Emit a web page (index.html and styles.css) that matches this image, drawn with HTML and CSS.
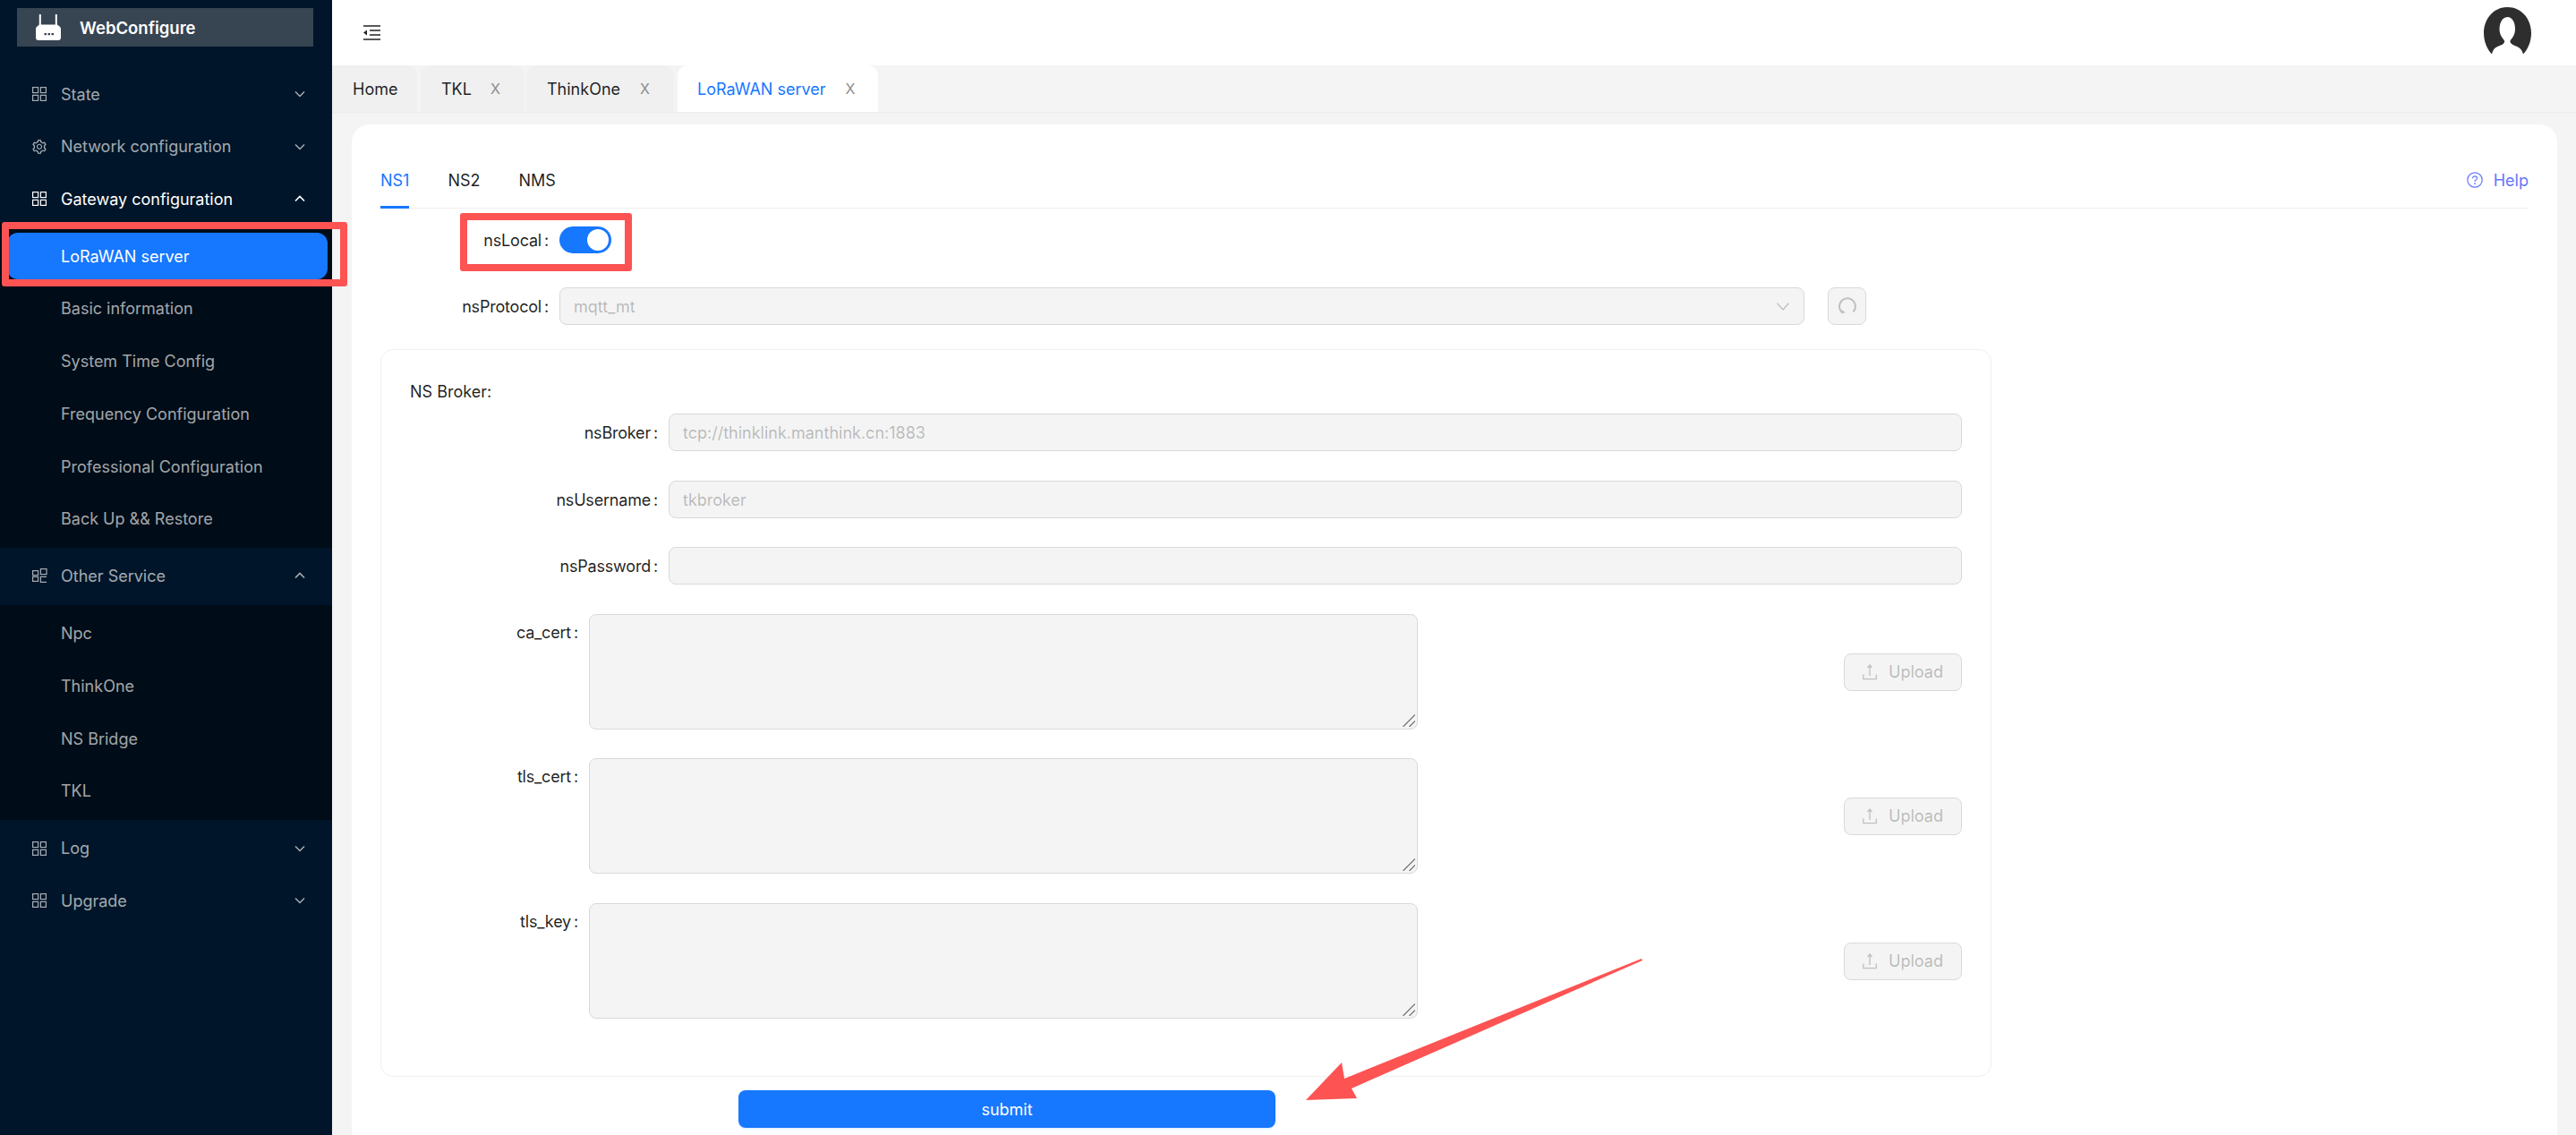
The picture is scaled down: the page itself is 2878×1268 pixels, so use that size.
FILE: index.html
```html
<!DOCTYPE html>
<html lang="en">
<head>
<meta charset="utf-8">
<title>WebConfigure</title>
<link rel="stylesheet" href="styles.css">
</head>
<body>
<svg class="defs" width="0" height="0" aria-hidden="true">
  <symbol id="i-grid" viewBox="0 0 16 16"><g fill="none" stroke="currentColor" stroke-width="1.2"><rect x="0.6" y="0.6" width="6" height="6"/><rect x="9.4" y="0.6" width="6" height="6"/><rect x="0.6" y="9.4" width="6" height="6"/><rect x="9.4" y="9.4" width="6" height="6"/></g></symbol>
  <symbol id="i-blocks" viewBox="0 0 17 16"><g fill="none" stroke="currentColor" stroke-width="1.2"><rect x="0.6" y="2.6" width="6" height="5"/><rect x="0.6" y="9.4" width="6" height="5"/><rect x="9.4" y="0.6" width="6.6" height="6"/><path d="M16 15.4H9.4V9.4H16"/></g></symbol>
  <symbol id="i-gear" viewBox="64 64 896 896"><path fill="currentColor" d="M924.8 625.7l-65.5-56c3.1-19 4.7-38.4 4.7-57.8s-1.6-38.8-4.7-57.8l65.5-56a32.03 32.03 0 0 0 9.3-35.2l-.9-2.6a443.74 443.74 0 0 0-79.7-137.9l-1.8-2.1a32.12 32.12 0 0 0-35.1-9.5l-81.3 28.9c-30-24.6-63.5-44-99.7-57.6l-15.7-85a32.05 32.05 0 0 0-25.8-25.7l-2.7-.5c-52.1-9.4-106.9-9.4-159 0l-2.7.5a32.05 32.05 0 0 0-25.8 25.7l-15.8 85.4a351.86 351.86 0 0 0-99 57.4l-81.9-29.1a32 32 0 0 0-35.1 9.5l-1.8 2.1a446.02 446.02 0 0 0-79.7 137.9l-.9 2.6c-4.5 12.5-.8 26.5 9.3 35.2l66.3 56.6c-3.1 18.8-4.6 38-4.6 57.1 0 19.2 1.5 38.4 4.6 57.1L99 625.5a32.03 32.03 0 0 0-9.3 35.2l.9 2.6c18.1 50.4 44.9 96.9 79.7 137.9l1.8 2.1a32.12 32.12 0 0 0 35.1 9.5l81.9-29.1c29.8 24.5 63.1 43.9 99 57.4l15.8 85.4a32.05 32.05 0 0 0 25.8 25.7l2.7.5a449.4 449.4 0 0 0 159 0l2.7-.5a32.05 32.05 0 0 0 25.8-25.7l15.7-85a350 350 0 0 0 99.7-57.6l81.3 28.9a32 32 0 0 0 35.1-9.5l1.8-2.1c34.8-41.1 61.6-87.5 79.7-137.9l.9-2.6c4.5-12.3.8-26.3-9.3-35zM788.3 465.9c2.5 15.1 3.8 30.6 3.8 46.1s-1.3 31-3.8 46.1l-6.6 40.1 74.7 63.9a370.03 370.03 0 0 1-42.6 73.6L721 702.8l-31.4 25.8c-23.9 19.6-50.5 35-79.3 45.8l-38.1 14.3-17.9 97a377.5 377.5 0 0 1-85 0l-17.9-97.2-37.8-14.5c-28.5-10.8-55-26.2-78.7-45.7l-31.4-25.9-93.4 33.2c-17-22.9-31.2-47.6-42.6-73.6l75.5-64.5-6.5-40c-2.4-14.9-3.7-30.3-3.7-45.5 0-15.3 1.2-30.6 3.7-45.5l6.5-40-75.5-64.5c11.3-26.1 25.6-50.7 42.6-73.6l93.4 33.2 31.4-25.9c23.7-19.5 50.2-34.9 78.7-45.7l37.9-14.3 17.9-97.2c28.1-3.2 56.8-3.2 85 0l17.9 97 38.1 14.3c28.7 10.8 55.4 26.2 79.3 45.8l31.4 25.8 92.8-32.9c17 22.9 31.2 47.6 42.6 73.6L781.8 426l6.5 39.9zM512 326c-97.2 0-176 78.8-176 176s78.8 176 176 176 176-78.8 176-176-78.8-176-176-176zm79.2 255.2A111.6 111.6 0 0 1 512 614c-29.9 0-58-11.7-79.2-32.8A111.6 111.6 0 0 1 400 502c0-29.9 11.7-58 32.8-79.2C454 401.6 482.1 390 512 390c29.9 0 58 11.6 79.2 32.8A111.6 111.6 0 0 1 624 502c0 29.9-11.7 58-32.8 79.2z"/></symbol>
  <symbol id="i-down" viewBox="0 0 12 8"><path d="M1 1.5l5 5 5-5" fill="none" stroke="currentColor" stroke-width="1.5"/></symbol>
  <symbol id="i-up" viewBox="0 0 12 8"><path d="M1 6.5l5-5 5 5" fill="none" stroke="currentColor" stroke-width="1.7"/></symbol>
  <symbol id="i-upload" viewBox="0 0 16 18"><path d="M8 13V1.5M5.6 4L8 1l2.4 3M.8 11.5v5.2h14.4v-5.2" fill="none" stroke="currentColor" stroke-width="1.3"/></symbol>
  <symbol id="i-grip" viewBox="0 0 14 14"><path d="M.5 14L14 .5M7.500 14L14 7.500" fill="none" stroke="#6e6e6e" stroke-width="1.200"/></symbol>
</svg>

<div class="app">
  <aside class="sidebar">
    <div class="logo">
      <svg class="logo-icon" viewBox="0 0 28 29" aria-hidden="true">
        <path d="M4.800 0v12M22.800 0v12" stroke="#fff" stroke-width="2" fill="none"/>
        <path d="M3 13.500h22a3 3 0 0 1 3 3V26a3 3 0 0 1-3 3H3a3 3 0 0 1-3-3v-9.500a3 3 0 0 1 3-3z" fill="#fff"/>
        <path d="M1 14l3-2.500h20l3 2.500z" fill="#fff"/>
        <g fill="#374452"><rect x="9.500" y="21" width="2.500" height="2.200"/><rect x="13.500" y="21" width="2.500" height="2.200"/><rect x="17.500" y="21" width="2.500" height="2.200"/></g>
      </svg>
      <span class="logo-text">WebConfigure</span>
    </div>
    <nav class="menu">
      <div class="row top-row"><svg class="row-icon"><use href="#i-grid"/></svg><span class="row-label">State</span><svg class="chev"><use href="#i-down"/></svg></div>
      <div class="row top-row"><svg class="row-icon"><use href="#i-gear"/></svg><span class="row-label">Network configuration</span><svg class="chev"><use href="#i-down"/></svg></div>
      <div class="row top-row open active"><svg class="row-icon"><use href="#i-grid"/></svg><span class="row-label">Gateway configuration</span><svg class="chev"><use href="#i-up"/></svg></div>
      <div class="sub sub-gateway">
        <div class="row sub-row selected"><span class="row-label">LoRaWAN server</span></div>
        <div class="row sub-row"><span class="row-label">Basic information</span></div>
        <div class="row sub-row"><span class="row-label">System Time Config</span></div>
        <div class="row sub-row"><span class="row-label">Frequency Configuration</span></div>
        <div class="row sub-row"><span class="row-label">Professional Configuration</span></div>
        <div class="row sub-row"><span class="row-label">Back Up &amp;&amp; Restore</span></div>
      </div>
      <div class="row top-row open other"><svg class="row-icon wide"><use href="#i-blocks"/></svg><span class="row-label">Other Service</span><svg class="chev"><use href="#i-up"/></svg></div>
      <div class="sub sub-other">
        <div class="row sub-row"><span class="row-label">Npc</span></div>
        <div class="row sub-row"><span class="row-label">ThinkOne</span></div>
        <div class="row sub-row"><span class="row-label">NS Bridge</span></div>
        <div class="row sub-row"><span class="row-label">TKL</span></div>
      </div>
      <div class="row top-row log"><svg class="row-icon"><use href="#i-grid"/></svg><span class="row-label">Log</span><svg class="chev"><use href="#i-down"/></svg></div>
      <div class="row top-row"><svg class="row-icon"><use href="#i-grid"/></svg><span class="row-label">Upgrade</span><svg class="chev"><use href="#i-down"/></svg></div>
    </nav>
  </aside>

  <main class="main">
    <header class="topbar">
      <svg class="fold" viewBox="0 0 19 17" aria-hidden="true">
        <path d="M0 1h19M7 6h12M7 11h12M0 16h19" stroke="#222" stroke-width="1.700" fill="none"/>
        <path d="M0 8.500L4 5.500v6z" fill="#222"/>
      </svg>
      <svg class="avatar" viewBox="0 0 53 53" aria-hidden="true">
        <path d="M9 52.500C3.500 47 0 38 0 29 0 13 11 0 26.500 0S53 13 53 29c0 9-3.500 18-9 23.500-1-4.500-3.500-7.500-8-9-3-1-5.500-2-6.500-4.500-.4-1 .2-2 1-3 2.500-3 4.500-6.500 4.500-11.500C35 16.500 31.500 11 26.500 11S17.500 16.500 17.500 24.500c0 5 2 8.500 4.500 11.500.8 1 1.400 2 1 3-1 2.500-3.500 3.500-6.500 4.500-4.500 1.500-6.500 4.500-7.500 9z" fill="#2e2e2e"/>
      </svg>
    </header>

    <div class="tabbar">
      <div class="tab tab-home">Home</div>
      <div class="tab tab-tkl">TKL<span class="tab-x">X</span></div>
      <div class="tab tab-one">ThinkOne<span class="tab-x">X</span></div>
      <div class="tab tab-on">LoRaWAN server<span class="tab-x">X</span></div>
    </div>

    <section class="card">
      <div class="ns-tabs">
        <span class="ns-tab ns-on">NS1</span>
        <span class="ns-tab">NS2</span>
        <span class="ns-tab">NMS</span>
        <span class="help">
          <svg class="help-icon" viewBox="0 0 18 18" aria-hidden="true"><circle cx="9" cy="9" r="8.200" fill="none" stroke="currentColor" stroke-width="1.200"/><path d="M6.500 7.200C6.500 5.700 7.600 4.800 9 4.800s2.500.9 2.500 2.200c0 1-.6 1.500-1.400 2-.7.4-1.100.8-1.100 1.600v.4" fill="none" stroke="currentColor" stroke-width="1.200"/><circle cx="9" cy="13.200" r=".9" fill="currentColor"/></svg>
          Help
        </span>
      </div>

      <div class="field field-switch">
        <label class="label l-outer">nsLocal<span class="colon">:</span></label>
        <span class="switch"><span class="knob"></span></span>
      </div>

      <div class="field field-proto">
        <label class="label l-outer">nsProtocol<span class="colon">:</span></label>
        <div class="select"><span>mqtt_mt</span>
          <svg class="select-arrow" viewBox="0 0 14 9" aria-hidden="true"><path d="M.5.800L7 8l6.500-7.200" fill="none" stroke="#bfbfbf" stroke-width="1.300"/></svg>
        </div>
        <button class="refresh" disabled>
          <svg viewBox="0 0 20 20" width="20" height="20" aria-hidden="true"><path d="M4 17A9 9 0 1 1 16.500 16.500" fill="none" stroke="#bfbfbf" stroke-width="2"/><path d="M2.500 13.800l5.500 3.200-4.500 1.600z" fill="#bfbfbf"/></svg>
        </button>
      </div>

      <div class="broker">
        <div class="broker-title">NS Broker:</div>
        <div class="field f-input f1">
          <label class="label l-input">nsBroker<span class="colon">:</span></label>
          <input class="text" disabled placeholder="tcp://thinklink.manthink.cn:1883">
        </div>
        <div class="field f-input f2">
          <label class="label l-input">nsUsername<span class="colon">:</span></label>
          <input class="text" disabled placeholder="tkbroker">
        </div>
        <div class="field f-input f3">
          <label class="label l-input">nsPassword<span class="colon">:</span></label>
          <input class="text" disabled>
        </div>
        <div class="field f-area a1">
          <label class="label l-area">ca_cert<span class="colon">:</span></label>
          <div class="area-wrap"><textarea class="area" disabled></textarea><svg class="grip"><use href="#i-grip"/></svg></div>
          <button class="upload" disabled><svg class="up-icon"><use href="#i-upload"/></svg>Upload</button>
        </div>
        <div class="field f-area a2">
          <label class="label l-area">tls_cert<span class="colon">:</span></label>
          <div class="area-wrap"><textarea class="area" disabled></textarea><svg class="grip"><use href="#i-grip"/></svg></div>
          <button class="upload" disabled><svg class="up-icon"><use href="#i-upload"/></svg>Upload</button>
        </div>
        <div class="field f-area a3">
          <label class="label l-area">tls_key<span class="colon">:</span></label>
          <div class="area-wrap"><textarea class="area" disabled></textarea><svg class="grip"><use href="#i-grip"/></svg></div>
          <button class="upload" disabled><svg class="up-icon"><use href="#i-upload"/></svg>Upload</button>
        </div>
      </div>

      <button class="submit">submit</button>
    </section>
  </main>

  <div class="mark mark-menu"></div>
  <div class="mark mark-switch"></div>
  <svg class="arrow" viewBox="0 0 2878 1268" aria-hidden="true">
    <polygon points="1834,1071 1502,1205 1499,1187 1459,1229 1516,1227 1510,1216 1835,1073" fill="#fd5353"/>
  </svg>
</div>
</body>
</html>
```

FILE: styles.css
```css
* { box-sizing: border-box; }
html, body { margin: 0; padding: 0; height: 100%; }
body {
  font-family: Inter, "Noto Sans", "Liberation Sans", sans-serif;
  font-size: 18px;
  color: rgba(0, 0, 0, 0.88);
  overflow: hidden;
}
.defs { position: absolute; }

.app {
  position: relative;
  display: flex;
  width: 2878px;
  height: 1268px;
  overflow: hidden;
  background: #f4f4f4;
}

/* Sidebar */
.sidebar {
  flex: 0 0 371px;
  background: #001529;
  padding-top: 9px;
  color: rgba(255, 255, 255, 0.65);
}
.logo {
  display: flex;
  align-items: center;
  height: 43px;
  margin: 0 21px 0 19px;
  padding-left: 21px;
  background: #374452;
}
.logo-icon { width: 28px; height: 29px; margin-right: 21px; }
.logo-text { color: #fff; font-weight: 600; font-size: 18.5px; }

.menu { margin-top: 27px; }
.row {
  display: flex;
  align-items: center;
  height: 52px;
}
.top-row { padding: 0 30px 0 36px; margin-bottom: 6.5px; }
.top-row.open { margin-bottom: 0; }
.top-row.active { color: #fff; }
.top-row.other { margin-top: 5px; margin-bottom: 7px; }
.top-row.other .row-label { padding-top: 2px; }
.top-row.log { margin-top: 6px; }
.row-icon { width: 16px; height: 16px; margin-right: 16px; flex: none; }
.row-icon.wide { width: 17px; margin-right: 15px; }
.row-label { flex: 1; white-space: nowrap; }
.chev { width: 12px; height: 8px; flex: none; }

.sub { background: #000c17; }
.sub-gateway { padding: 12px 0 6px; }
.sub-other { padding: 5px 0 6.6px; }
.sub-other .row-label { padding-top: 1px; }
.sub-row {
  padding-left: 68px;
  margin-bottom: 6.8px;
}
.sub-row:last-child { margin-bottom: 0; }
.sub-row.selected {
  margin-left: 8px;
  margin-right: 5px;
  padding-left: 60px;
  background: #1677ff;
  border-radius: 12px;
  color: #fff;
}

/* Main */
.main { flex: 1; display: flex; flex-direction: column; min-width: 0; }
.topbar {
  flex: 0 0 73px;
  display: flex;
  align-items: center;
  justify-content: space-between;
  padding: 0 50px 12px 35px;
  background: #fff;
}
.fold { width: 19px; height: 17px; margin-top: 12px; }
.avatar { width: 53px; height: 53px; margin-top: 8px; }

.tabbar {
  flex: 0 0 53px;
  display: flex;
  align-items: flex-end;
  border-bottom: 1px solid #ececec;
  background: #f4f4f4;
}
.tab {
  display: flex;
  align-items: center;
  height: 52px;
  padding: 0 21px 0 23px;
  background: #f0f0f0;
  border-radius: 0 12px 0 0;
  white-space: nowrap;
}
.tab-home { width: 95px; }
.tab-tkl { width: 116px; margin-left: 4px; border-radius: 12px 12px 0 0; }
.tab-tkl .tab-x { margin-left: 21px; }
.tab-one { width: 165px; margin-left: 2px; border-radius: 12px 12px 0 0; }
.tab-on { width: 224px; margin-left: 4px; padding-left: 22px; background: #fff; color: #1677ff; border-radius: 12px 12px 0 0; }
.tab-x { margin-left: 22px; color: #8c8c8c; font-size: 16px; }

.card {
  flex: 1;
  margin: 13px 21px 0 22px;
  padding: 0 32px;
  background: #fff;
  border-radius: 20px 20px 0 0;
}

.ns-tabs {
  display: flex;
  align-items: center;
  height: 94px;
  padding-top: 31px;
  border-bottom: 1px solid #eeeeee;
  position: relative;
}
.ns-tab { margin-right: 43px; }
.ns-on { color: #1677ff; position: relative; align-self: stretch; display: flex; align-items: center; }
.ns-on::after {
  content: "";
  position: absolute;
  left: 0; right: 0; bottom: -1px;
  height: 3px;
  background: #1677ff;
}
.help {
  margin-left: auto;
  display: flex;
  align-items: center;
  color: #6676f8;
  font-size: 18px;
}
.help-icon { width: 18px; height: 18px; margin-right: 12px; }

.field { display: flex; align-items: center; }
.label { text-align: right; flex: none; padding-right: 12px; white-space: nowrap; letter-spacing: -0.2px; }
.colon { margin-left: 3px; }
.l-outer { width: 200px; }
.l-input { width: 289px; }
.l-area { width: 200px; align-self: flex-start; padding-top: 10px; }

.field-switch { margin-top: 20px; height: 30px; }
.switch {
  display: flex;
  justify-content: flex-end;
  align-items: center;
  width: 58px;
  height: 30px;
  padding-right: 3px;
  background: #1677ff;
  border-radius: 15px;
}
.knob { width: 24px; height: 24px; border-radius: 50%; background: #fff; }

.field-proto { margin-top: 38px; }
.select {
  flex: none;
  width: 1391px;
  height: 42px;
  display: flex;
  align-items: center;
  justify-content: space-between;
  padding: 0 16px 0 15px;
  background: #f4f4f4;
  border: 1px solid #d9d9d9;
  border-radius: 8px;
  color: rgba(0, 0, 0, 0.25);
}
.select-arrow { width: 14px; height: 9px; }
.refresh {
  width: 43px;
  height: 42px;
  margin-left: 26px;
  padding: 0;
  display: flex;
  align-items: center;
  justify-content: center;
  background: #f4f4f4;
  border: 1px solid #d9d9d9;
  border-radius: 8px;
}

.broker {
  width: 1800px;
  height: 813px;
  margin-top: 27px;
  padding: 34px 32px 0;
  border: 1px solid #f0f0f0;
  border-radius: 14px;
}
.broker-title { height: 26px; line-height: 26px; }

.f-input { height: 42px; }
.f1 { margin-top: 11px; }
.f2 { margin-top: 33px; }
.f3 { margin-top: 32px; }
.text {
  flex: none;
  width: 1445px;
  height: 42px;
  padding: 0 15px;
  font: inherit;
  background: #f4f4f4;
  border: 1px solid #d9d9d9;
  border-radius: 8px;
}
.text::placeholder { color: rgba(0, 0, 0, 0.25); opacity: 1; }

.a1 { margin-top: 33px; }
.a2 { margin-top: 32px; }
.a3 { margin-top: 33px; }
.area-wrap { position: relative; flex: none; width: 926px; height: 129px; }
.area {
  display: block;
  width: 100%;
  height: 100%;
  font: inherit;
  background: #f4f4f4;
  border: 1px solid #d9d9d9;
  border-radius: 8px;
  resize: none;
}
.grip { position: absolute; right: 3px; bottom: 3px; width: 14px; height: 14px; }
.upload {
  width: 132px;
  height: 42px;
  margin-left: auto;
  display: flex;
  align-items: center;
  justify-content: center;
  font: inherit;
  color: rgba(0, 0, 0, 0.25);
  background: #f4f4f4;
  border: 1px solid #d9d9d9;
  border-radius: 8px;
}
.up-icon { width: 16px; height: 18px; margin-right: 13px; color: #bfbfbf; }

.submit {
  display: block;
  width: 600px;
  height: 42px;
  margin: 15px 0 0 400px;
  font: inherit;
  color: #fff;
  background: #1677ff;
  border: 0;
  border-radius: 8px;
  box-shadow: 0 2px 0 rgba(5, 145, 255, 0.1);
}

/* Annotations lying over the screenshot */
.mark {
  position: absolute;
  border: 8px solid #fd5353;
  border-radius: 3px;
}
.mark-menu { left: 2px; top: 248px; width: 386px; height: 72px; }
.mark-switch { left: 514px; top: 238px; width: 192px; height: 65px; }
.arrow {
  position: absolute;
  left: 0; top: 0;
  width: 2878px;
  height: 1268px;
  pointer-events: none;
}
```
